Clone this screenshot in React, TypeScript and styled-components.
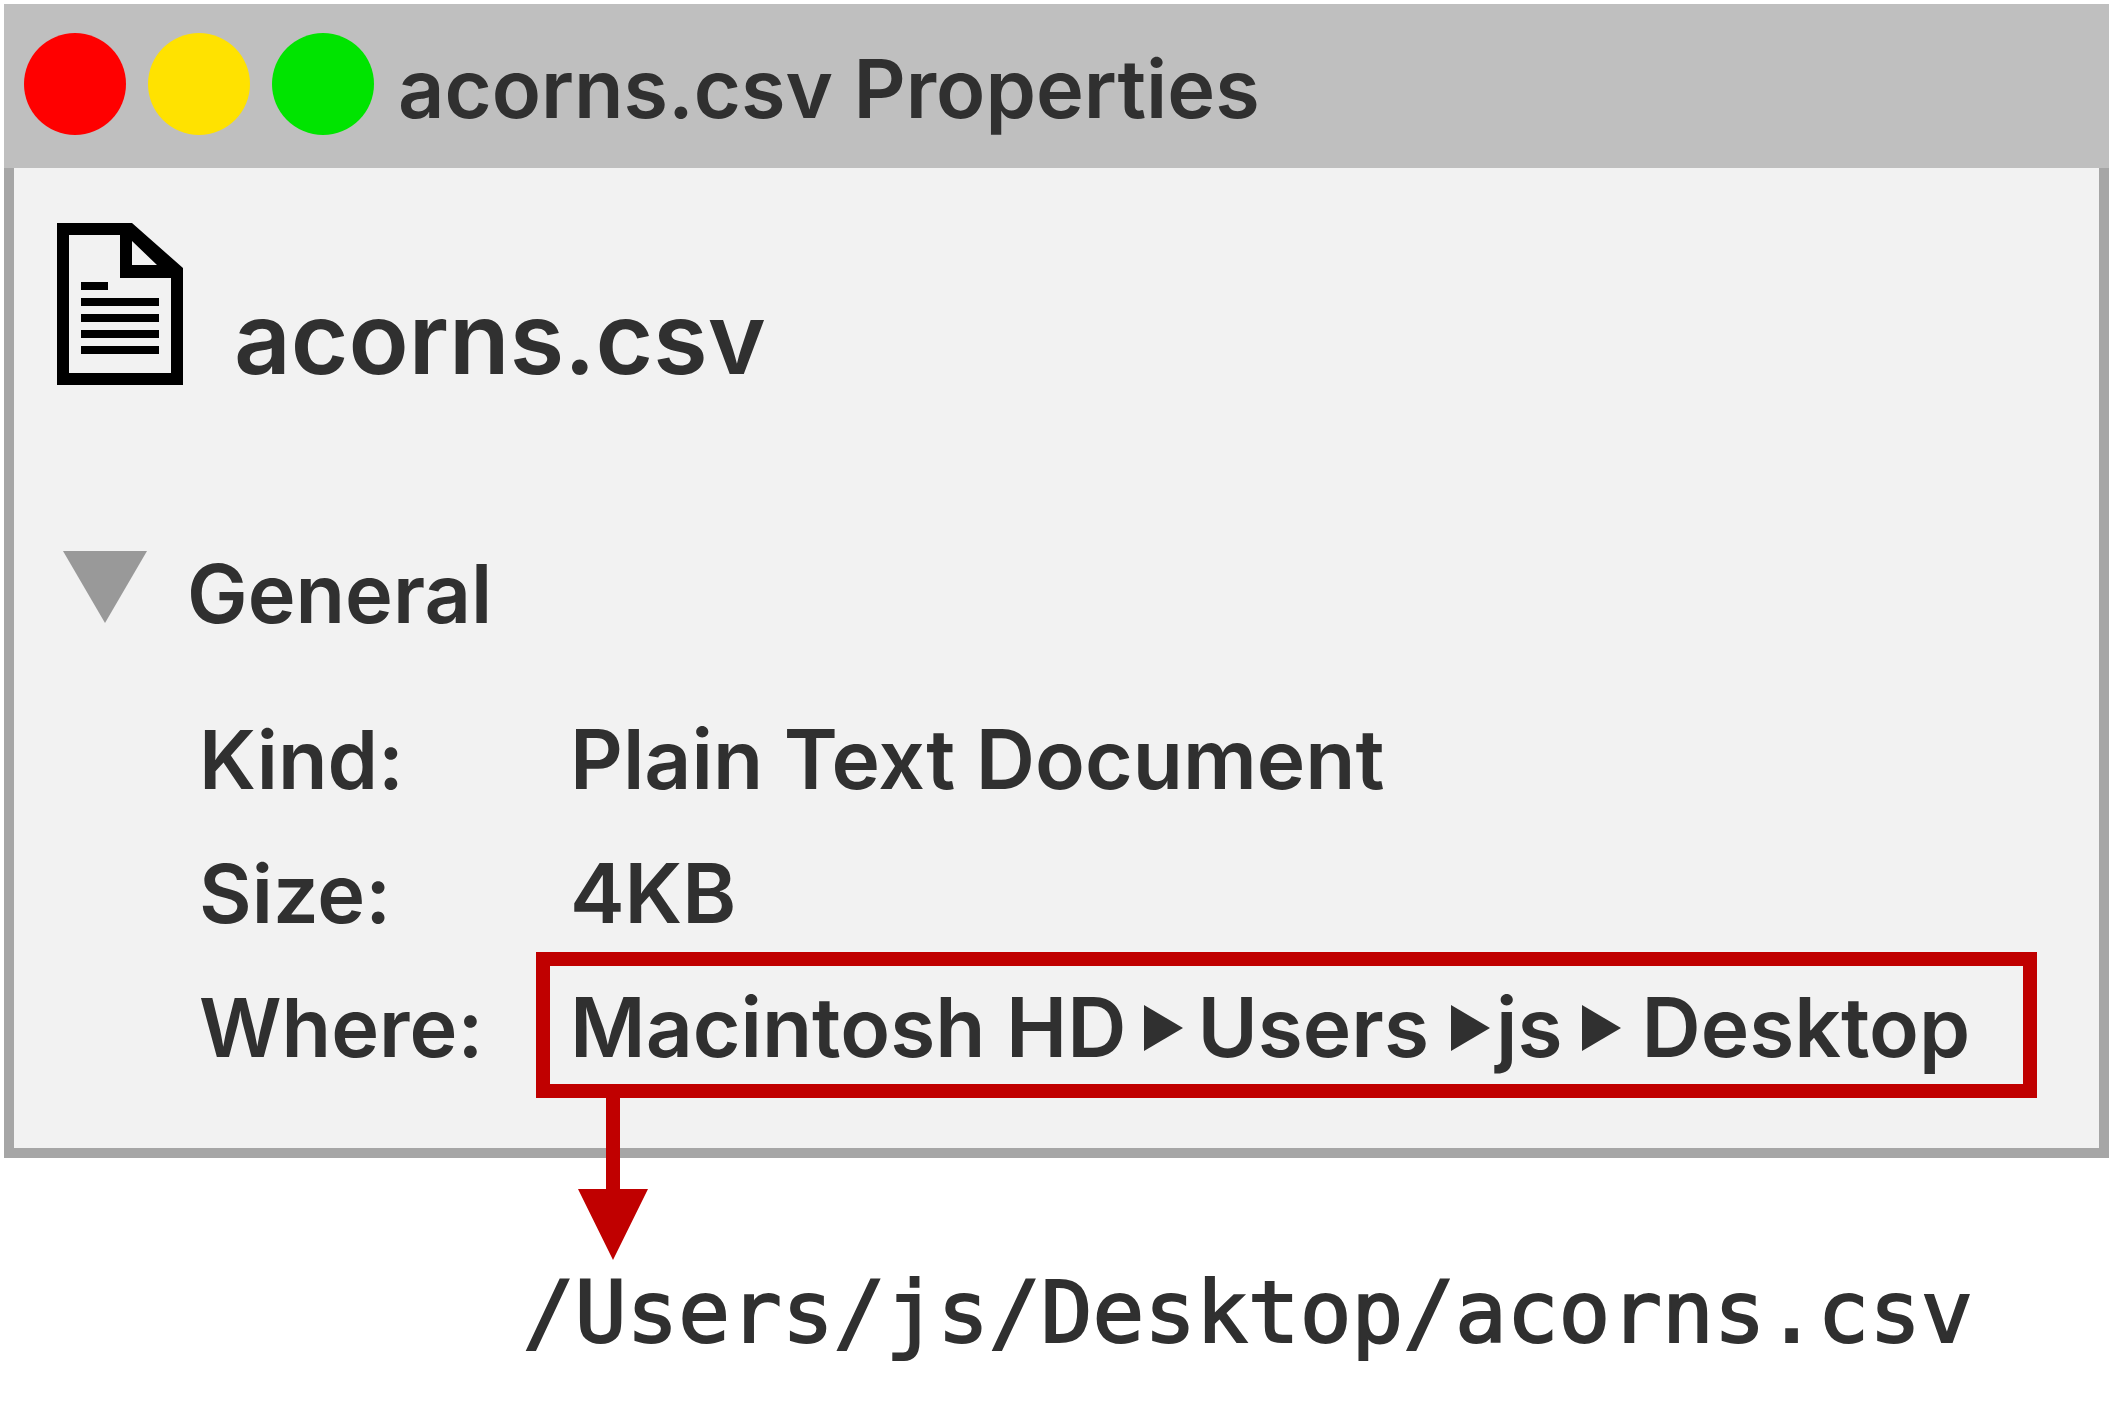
import React from 'react';
import styled, { createGlobalStyle } from 'styled-components';

const ink = '#303030';
const red = '#c00000';

const GlobalStyle = createGlobalStyle`
  *, *::before, *::after { box-sizing: border-box; }
  body {
    margin: 0;
    background: #fff;
    color: ${ink};
    font-family: Inter, "Liberation Sans", sans-serif;
    font-size: 81px;
    font-weight: 600;
    line-height: 96px;
  }
`;

const Page = styled.main`
  padding: 4px 3px 0 4px;
`;

const Window = styled.section`
  display: flex;
  flex-direction: column;
`;

const TitleBar = styled.header`
  display: flex;
  align-items: center;
  gap: 24px;
  height: 164px;
  padding: 0 20px;
  background: #bfbfbf;
`;

const Lights = styled.div`
  display: flex;
  gap: 22px;
  padding-bottom: 4px;
`;

const Light = styled.button<{ $color: string }>`
  width: 102px;
  height: 102px;
  padding: 0;
  border: 0;
  border-radius: 50%;
  background: ${(p) => p.$color};
`;

const Title = styled.h1`
  margin: 0;
  padding-top: 6px;
  font-size: 81px;
  font-weight: 600;
  white-space: nowrap;
`;

const Body = styled.div`
  padding: 54px 62px 56px 42px;
  border: 10px solid #a6a6a6;
  border-top: 0;
  background: #f2f2f2;
`;

const FileHeader = styled.div`
  display: flex;
  gap: 50px;
  height: 164px;
`;

const FileIcon = styled.svg`
  width: 128px;
  height: 164px;
  flex: none;
`;

const FileName = styled.h2`
  margin: 0;
  padding-top: 56px;
  font-size: 99px;
  font-weight: 600;
  line-height: 120px;
`;

const SectionToggle = styled.button`
  display: flex;
  align-items: center;
  gap: 40px;
  margin-top: 160px;
  padding: 0 0 0 7px;
  border: 0;
  background: none;
  color: inherit;
  font: inherit;
`;

const Caret = styled.svg`
  width: 84px;
  height: 72px;
  margin-bottom: 14px;
`;

const Facts = styled.dl`
  display: grid;
  grid-template-columns: 337px 1fr;
  grid-auto-rows: 134px;
  align-items: center;
  margin: 48px 0 0;
  padding-left: 143px;
`;

const Term = styled.dt`
  padding-top: 6px;
  white-space: nowrap;
`;

const Value = styled.dd`
  margin: 0;
  padding: 6px 0 0 34px;
  font-size: 82px;
  white-space: nowrap;
`;

const PathValue = styled.dd`
  position: relative;
  display: flex;
  align-items: center;
  height: 146px;
  margin: 0;
  padding: 6px 0 0 20px;
  border: 14px solid ${red};
  font-size: 82px;
  white-space: nowrap;
`;

const Separator = styled.svg<{ $before: number; $after: number }>`
  flex: none;
  width: 39px;
  height: 46px;
  margin: 0 ${(p) => p.$after}px 0 ${(p) => p.$before}px;
`;

const Arrow = styled.svg`
  position: absolute;
  top: 132px;
  left: 28px;
  width: 70px;
  height: 162px;
`;

const FullPath = styled.p`
  margin: 102px 0 0;
  padding-left: 519px;
  font-family: "DejaVu Sans Mono", monospace;
  font-size: 86px;
  font-weight: 400;
  line-height: 104px;
  white-space: nowrap;
  -webkit-text-stroke: 2px ${ink};
`;

function Crumb({ before, after }: { before: number; after: number }) {
  return (
    <Separator $before={before} $after={after} viewBox="0 0 39 46" aria-hidden="true">
      <path d="M0 0L39 23L0 46Z" fill={ink} />
    </Separator>
  );
}

export default function App() {
  return (
    <>
      <GlobalStyle />
      <Page>
        <Window>
          <TitleBar>
            <Lights>
              <Light $color="#ff0000" aria-label="Close" />
              <Light $color="#ffe200" aria-label="Minimize" />
              <Light $color="#00e400" aria-label="Zoom" />
            </Lights>
            <Title>acorns.csv Properties</Title>
          </TitleBar>
          <Body>
            <FileHeader>
              <FileIcon viewBox="0 0 128 164" aria-hidden="true">
                <path
                  fillRule="evenodd"
                  d="M1 1H76L127 46V163H1ZM13 13V151H115V56H64V13ZM76 19V43H101Z"
                />
                <path d="M25 60H52V68H25ZM25 76H103V84H25ZM25 92H103V100H25ZM25 108H103V116H25ZM25 124H103V132H25Z" />
              </FileIcon>
              <FileName>acorns.csv</FileName>
            </FileHeader>
            <SectionToggle aria-expanded="true">
              <Caret viewBox="0 0 84 72" aria-hidden="true">
                <path d="M0 0H84L42 72Z" fill="#999" />
              </Caret>
              General
            </SectionToggle>
            <Facts>
              <Term>Kind:</Term>
              <Value>Plain Text Document</Value>
              <Term>Size:</Term>
              <Value>4KB</Value>
              <Term>Where:</Term>
              <PathValue>
                Macintosh HD
                <Crumb before={18} after={14} />
                Users
                <Crumb before={22} after={6} />
                js
                <Crumb before={20} after={20} />
                Desktop
                <Arrow viewBox="0 0 70 162" aria-hidden="true">
                  <path d="M28 0H42V91H70L35 162L0 91H28Z" fill={red} />
                </Arrow>
              </PathValue>
            </Facts>
          </Body>
        </Window>
        <FullPath>/Users/js/Desktop/acorns.csv</FullPath>
      </Page>
    </>
  );
}
